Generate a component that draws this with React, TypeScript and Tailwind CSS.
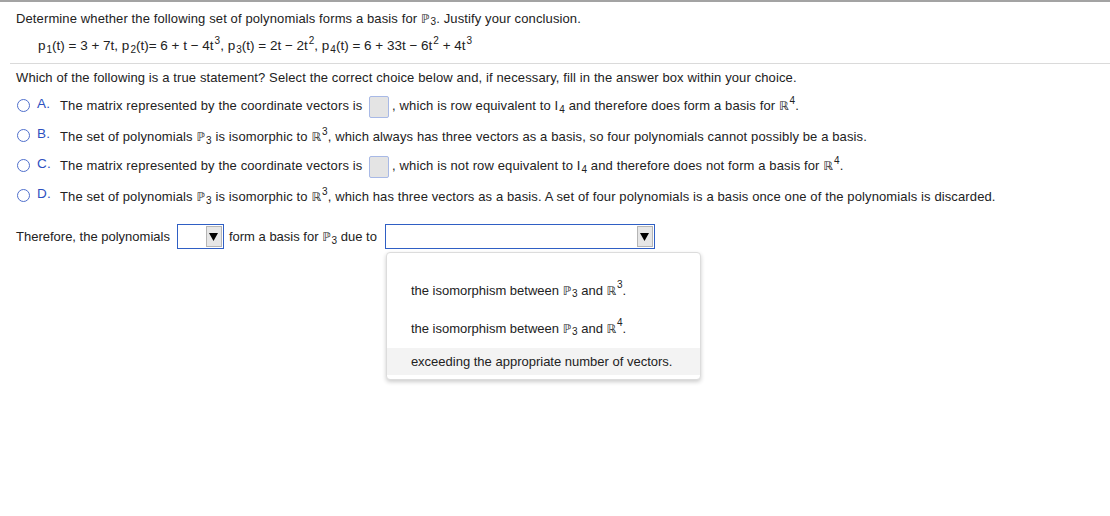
import React from "react";

const P = () => <span className="font-['DejaVu_Sans',sans-serif] text-[12px]">ℙ</span>;
const R = () => <span className="font-['DejaVu_Sans',sans-serif] text-[12px]">ℝ</span>;
const Sub = ({ children }: { children: React.ReactNode }) => (
  <sub className="text-[10px] top-[3px] ml-[1px]">{children}</sub>
);
const Sup = ({ children }: { children: React.ReactNode }) => (
  <sup className="text-[10px] top-[-6px] ml-[1px]">{children}</sup>
);

const AnswerBox = () => (
  <span className="inline-block align-middle w-[20px] h-[22px] mx-[3px] bg-[#e4e4e4] border border-[#a8b9e6] rounded-[2px]" />
);

const Arrow = () => (
  <span className="flex items-center justify-center w-[16px] h-[21px] bg-[#e6e6e6] border border-[#b5b5b5]">
    <svg width="9" height="9" viewBox="0 0 9 9">
      <polygon points="0,1 9,1 4.5,9" fill="#000" />
    </svg>
  </span>
);

interface OptionProps {
  letter: string;
  children: React.ReactNode;
}

const Option: React.FC<OptionProps> = ({ letter, children }) => (
  <div className="flex items-center h-[30px]">
    <span className="w-[13px] h-[13px] ml-[17px] rounded-full border-[1.5px] border-[#4f6fcc] -mt-[3px]" />
    <span className="w-[30px] pl-[7px] text-[13.5px] text-[#2d50bf] -mt-[6px]">{letter}.</span>
    <span>{children}</span>
  </div>
);

export default function App() {
  return (
    <div className="w-[1110px] h-[516px] bg-white text-[#222] text-[13px] tracking-[0.12px] font-['Liberation_Sans',Arial,sans-serif] border-t-2 border-[#a3a3a3]">
      <div className="pl-[16px] h-[33px] flex items-center">
        Determine whether the following set of polynomials forms a basis for&nbsp;<P />
        <Sub>3</Sub>. Justify your conclusion.
      </div>
      <div className="pl-[38px] h-[22px] flex items-center text-[13.5px] tracking-normal">
        <span>
          p<Sub>1</Sub>(t) = 3 + 7t, p<Sub>2</Sub>(t)= 6 + t − 4t<Sup>3</Sup>, p<Sub>3</Sub>(t) = 2t − 2t
          <Sup>2</Sup>, p<Sub>4</Sub>(t) = 6 + 33t − 6t<Sup>2</Sup> + 4t<Sup>3</Sup>
        </span>
      </div>
      <div className="h-[6px]" />
      <div className="ml-[10px] border-t border-[#dadada]" />
      <div className="pl-[16px] h-[28px] flex items-center">
        Which of the following is a true statement? Select the correct choice below and, if necessary, fill in the answer box within your choice.
      </div>

      <Option letter="A">
        The matrix represented by the coordinate vectors is <AnswerBox />, which is row equivalent to I<Sub>4</Sub> and therefore does form a basis for <R />
        <Sup>4</Sup>.
      </Option>
      <Option letter="B">
        The set of polynomials <P />
        <Sub>3</Sub> is isomorphic to <R />
        <Sup>3</Sup>, which always has three vectors as a basis, so four polynomials cannot possibly be a basis.
      </Option>
      <Option letter="C">
        The matrix represented by the coordinate vectors is <AnswerBox />, which is not row equivalent to I<Sub>4</Sub> and therefore does not form a basis for <R />
        <Sup>4</Sup>.
      </Option>
      <Option letter="D">
        The set of polynomials <P />
        <Sub>3</Sub> is isomorphic to <R />
        <Sup>3</Sup>, which has three vectors as a basis. A set of four polynomials is a basis once one of the polynomials is discarded.
      </Option>

      <div className="mt-[12px] pl-[16px] h-[25px] flex items-center tracking-normal">
        <span>Therefore, the polynomials</span>
        <span className="ml-[7px] w-[47px] h-[25px] border border-[#2f5fc4] flex items-center justify-end pr-[1px]">
          <Arrow />
        </span>
        <span className="ml-[5px]">
          form a basis for <P />
          <Sub>3</Sub> due to
        </span>
        <div className="relative ml-[8px]">
          <span className="w-[270px] h-[25px] border border-[#2f5fc4] flex items-center justify-end pr-[1px]">
            <Arrow />
          </span>
          <div className="absolute left-[1px] top-[28px] w-[315px] h-[128px] bg-white border border-[#dcdcdc] rounded-[4px] shadow-[0_2px_4px_rgba(0,0,0,0.2)] pt-[20px]">
            <div className="h-[36px] flex items-center pl-[24px]">
              the isomorphism between&nbsp;<P />
              <Sub>3</Sub>&nbsp;and&nbsp;<R />
              <Sup>3</Sup>.
            </div>
            <div className="h-[39px] flex items-center pl-[24px]">
              the isomorphism between&nbsp;<P />
              <Sub>3</Sub>&nbsp;and&nbsp;<R />
              <Sup>4</Sup>.
            </div>
            <div className="h-[27px] flex items-center pl-[24px] bg-[#f3f3f3]">
              exceeding the appropriate number of vectors.
            </div>
          </div>
        </div>
      </div>
    </div>
  );
}
